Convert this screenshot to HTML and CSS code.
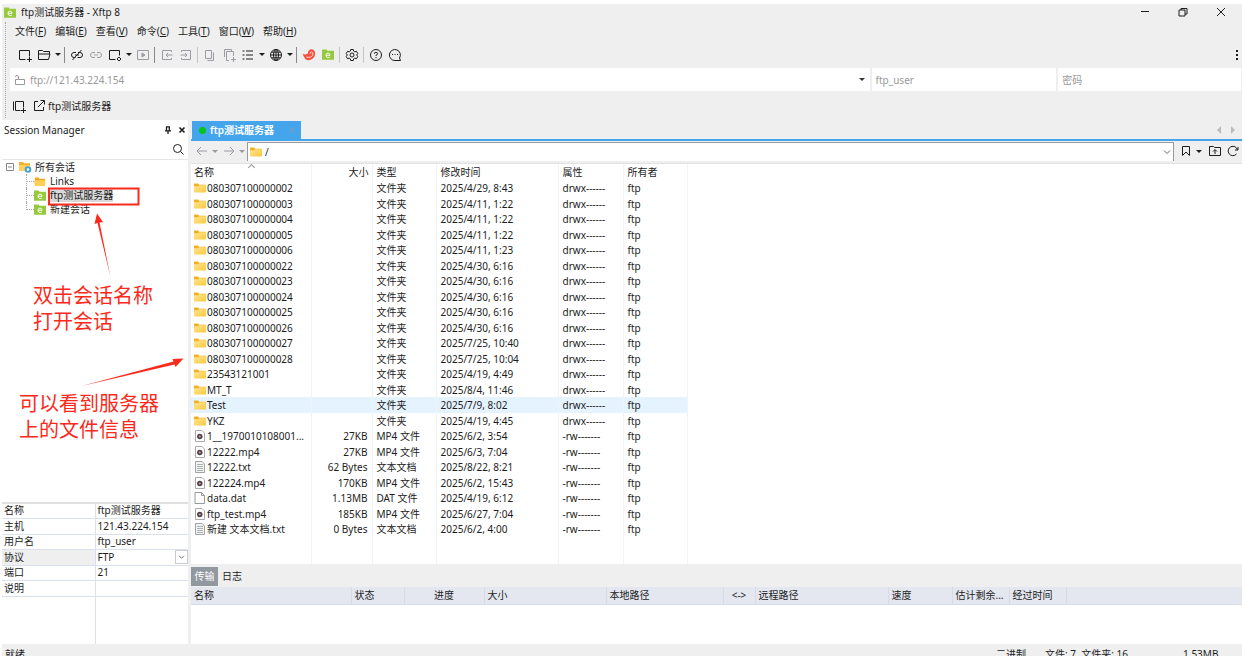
FILE: index.html
```html
<!DOCTYPE html>
<html lang="zh-CN">
<head>
<meta charset="utf-8">
<title>ftp测试服务器 - Xftp 8</title>
<link rel="stylesheet" href="styles.css">
</head>
<body>
<svg class="defs" aria-hidden="true">
  <defs>
    <linearGradient id="fg" x1="0" y1="0" x2="1" y2="1"><stop offset="0" stop-color="#ffe694"/><stop offset="1" stop-color="#fbc83c"/></linearGradient>
  </defs>
  <symbol id="folder" viewBox="0 0 12 10"><path d="M0 1.2Q0 .5.7.5H4l1 1.2h6.3q.7 0 .7.7V5H0z" fill="#f2b01e"/><path d="M0 3.2h4.2l1-.9H12v6.5q0 .7-.7.7H.7Q0 9.500 0 8.800z" fill="url(#fg)"/></symbol>
  <symbol id="openfolder" viewBox="0 0 12 10"><path d="M1 9V1h3.500l1 1.200H11V9z" fill="#f0a91f"/><path d="M0 3.800h11.500L10.800 9.500H.8z" fill="#ffcf58"/></symbol>
  <symbol id="green" viewBox="0 0 12 11"><path d="M0 .5h4.500l1 1.300H12v9H0z" fill="#96c93d"/><path d="M4 6.300h4A2 2.200 0 0 0 4 6.300q0 2.300 2.200 2.300 1.200 0 1.800-.7" fill="none" stroke="#fff" stroke-width=".9"/></symbol>
  <symbol id="mp4" viewBox="0 0 12 12"><path d="M1.500.5h6.500L10.500 3v8.500h-9z" fill="#fff" stroke="#aaa"/><circle cx="5.800" cy="6.500" r="2.700" fill="#454050"/><circle cx="5.800" cy="6.500" r="1.100" fill="#f5a06c"/></symbol>
  <symbol id="txt" viewBox="0 0 12 12"><path d="M1.500.5h6.500L10.500 3v8.500h-9z" fill="#f2f3f3" stroke="#a0a4a4"/><path d="M3 3.500h6M3 5.500h6M3 7.500h6M3 9.500h6" stroke="#a4a8a8" stroke-width=".9"/></symbol>
  <symbol id="dat" viewBox="0 0 12 12"><path d="M1 .5h6.500L10.500 3.500v8H1z" fill="#fff" stroke="#999"/><path d="M7.500.5v3h3" fill="none" stroke="#999"/></symbol>
</svg>
<div class="app">
  <header class="titlebar">
    <svg class="i12"><use href="#green"/></svg>
    <h1>ftp测试服务器 - Xftp 8</h1>
    <div class="winbtns">
      <button aria-label="最小化"><svg viewBox="0 0 10 10"><path d="M1 4.500h8"/></svg></button>
      <button aria-label="还原"><svg viewBox="0 0 10 10"><path d="M1 3h6v6H1zM3 3V1.500h6V7H7"/></svg></button>
      <button aria-label="关闭"><svg viewBox="0 0 10 10"><path d="M1 1l8 8M9 1L1 9"/></svg></button>
    </div>
  </header>

  <div class="bars">
    <nav class="menu">
      <button>文件(<u>F</u>)</button><button>编辑(<u>E</u>)</button><button>查看(<u>V</u>)</button><button>命令(<u>C</u>)</button><button>工具(<u>T</u>)</button><button>窗口(<u>W</u>)</button><button>帮助(<u>H</u>)</button>
    </nav>
    <div class="toolbar" role="toolbar">
      <button aria-label="新建"><svg viewBox="0 0 14 14"><path d="M7.500 11.500h-6v-9h10v6M11.500 9v5M9 11.500h5"/></svg></button>
      <button aria-label="打开"><svg viewBox="0 0 14 14"><path d="M1.500 11.500v-9h4l1 1h6v2.500M1.500 6h11.500l-1.500 5.500h-10"/></svg></button>
      <button class="caret" aria-label="打开列表"></button><i class="sep dark"></i>
      <button aria-label="断开"><svg viewBox="0 0 14 14"><path d="M5.500 9.500H4Q1.500 9.500 1.500 7T4 4.500h2M8 4.500h2q2.500 0 2.500 2.500T10 9.500H7.500M5 7h4M2.500 12l9-10"/></svg></button>
      <button class="off" aria-label="重新连接"><svg viewBox="0 0 14 14"><path d="M6 9.500H4Q1.500 9.500 1.500 7T4 4.500h2M8 4.500h2q2.500 0 2.500 2.500T10 9.500H8M5 7h4"/></svg></button>
      <button aria-label="属性"><svg viewBox="0 0 14 14"><path d="M7.500 11.500h-6v-9h10v5M11 9l2 2-2 2-2-2z"/></svg></button>
      <button class="caret" aria-label="属性列表"></button>
      <button class="off" aria-label="运行"><svg viewBox="0 0 14 14"><path d="M1.500 2.500h11v9h-11z"/><path d="M6 5l3 2-3 2z" fill="currentColor"/></svg></button><i class="sep dark"></i>
      <button class="off" aria-label="下载"><svg viewBox="0 0 14 14"><path d="M11.500 4V2.500h-9v9h9V10M12.500 7H6M8 5L6 7l2 2"/></svg></button>
      <button class="off" aria-label="上传"><svg viewBox="0 0 14 14"><path d="M2.500 4V2.500h9v9h-9V10M1.500 7H8M6 5l2 2-2 2"/></svg></button><i class="sep"></i>
      <button class="off" aria-label="复制"><svg viewBox="0 0 14 14"><path d="M2.500 2.500h6v8h-6zM4.500 12.500h6v-8"/></svg></button>
      <button class="off" aria-label="粘贴"><svg viewBox="0 0 14 14"><path d="M2.500 9V1.500h7V3M7 12.500H4.500v-9h7V8M11.500 9v5M9 11.500h5"/></svg></button>
      <button aria-label="视图"><svg viewBox="0 0 14 14"><path d="M5 3h7M5 7h7M5 11h7M1.500 3h2M1.500 7h2M1.500 11h2"/></svg></button>
      <button class="caret" aria-label="视图列表"></button>
      <button aria-label="编码"><svg viewBox="0 0 14 14"><circle cx="7" cy="7" r="5.500"/><ellipse cx="7" cy="7" rx="2.500" ry="5.500"/><path d="M1.500 7h11M7 1.500v11M2.500 4.200h9M2.500 9.800h9"/></svg></button>
      <button class="caret" aria-label="编码列表"></button><i class="sep dark"></i>
      <button aria-label="Xshell"><svg viewBox="0 0 14 14"><path d="M1 5.500Q3 7.500 5.800 5.500C5.800 3 7.500 1 10 1.300c3.500.6 4 5.500 1.600 8.500C8.500 13.500 3 12.500 2.500 9.500 1.500 8.500 1 7 1 5.500z" fill="#f4503b" stroke="none"/><path d="M4.500 9q5.500 1.500 6.500-3Q11 4 9.200 4 7.500 4.300 8 6" stroke="#ffd5cd"/></svg></button>
      <button aria-label="Xftp"><svg class="i12"><use href="#green"/></svg></button><i class="sep"></i>
      <button aria-label="选项"><svg viewBox="0 0 14 14"><path d="M5.700 1.500h2.600l.4 1.700 1.100.6 1.700-.5 1.300 2.300L11.600 7l1.200 1.400-1.300 2.300-1.700-.5-1.100.6-.4 1.700H5.700l-.4-1.700-1.100-.6-1.700.5-1.300-2.300L2.400 7 1.200 5.600l1.300-2.300 1.700.5 1.100-.6z"/><circle cx="7" cy="7" r="2"/></svg></button><i class="sep"></i>
      <button aria-label="帮助"><svg viewBox="0 0 14 14"><circle cx="7" cy="7" r="5.500"/><path d="M5.300 5.800Q5.300 4.300 7 4.300t1.700 1.400Q8.700 6.600 7 7.200V8M7 9v1.200"/></svg></button>
      <button aria-label="反馈"><svg viewBox="0 0 14 14"><path d="M12.500 12.500H7A5.500 5.500 0 1 1 11.500 10z"/><path d="M4 6.500h1M6.500 6.500h1M9 6.500h1"/></svg></button>
      <button class="more" aria-label="更多"><svg viewBox="0 0 4 14"><path d="M2 2v2M2 6v2M2 10v2" stroke-width="2"/></svg></button>
    </div>
    <div class="address">
      <label class="host"><svg viewBox="0 0 12 12"><path d="M4.500 5.500h6v5h-9v-5h3V3Q4.500 1.500 3 1.500T1.500 3"/></svg><input aria-label="地址" value="ftp://121.43.224.154"><button class="caret" aria-label="地址列表"></button></label>
      <input class="user" aria-label="用户名" value="ftp_user">
      <input class="pass" aria-label="密码" type="password" placeholder="密码">
    </div>
    <div class="links">
      <button aria-label="添加到链接栏"><svg viewBox="0 0 14 14"><path d="M1.500 2.500v9M8.500 11.500h-5v-9h8v6M11.500 9v5M9 11.500h5"/></svg></button>
      <button><svg viewBox="0 0 14 14"><path d="M6 2.500H2.500v9h9V8M6 8l6-6M8.500 1.500h4v4"/></svg>ftp测试服务器</button>
    </div>
  </div>

  <main class="work">
    <aside class="side">
      <div class="sidehead"><h2>Session Manager</h2>
        <button aria-label="固定"><svg viewBox="0 0 8 8"><path d="M2 .8h4M2.500 1v3.500M5.300 1v3.500M1 4.800h6M4 5v3" stroke-width="1.300"/></svg></button>
        <button aria-label="关闭"><svg viewBox="0 0 8 8"><path d="M1.500 1.500l5 5M6.500 1.500l-5 5" stroke-width="1.600"/></svg></button></div>
      <div class="search"><input aria-label="搜索会话"><button aria-label="搜索"><svg viewBox="0 0 12 12"><circle cx="5.500" cy="5.500" r="4"/><path d="M8.500 8.500l3 3"/></svg></button></div>
      <div class="tree">
        <div class="root"><button class="toggle" aria-label="折叠"><svg viewBox="0 0 8 8"><path d="M.5.5h7v7h-7zM2 4h4"/></svg></button>
          <svg class="rooticon" viewBox="0 0 13 12"><path d="M0 9.500V1h4l1 1.200h6V9.500z" fill="#f5b02c"/><path d="M0 4h11v6H0z" fill="#ffd062"/><circle cx="9" cy="8.500" r="2.300" fill="#fff" stroke="#43a5d4" stroke-width="2"/></svg>所有会话</div>
        <ul>
          <li><svg class="i12"><use href="#openfolder"/></svg><span>Links</span></li>
          <li><svg class="i12"><use href="#green"/></svg><span class="sel">ftp测试服务器</span></li>
          <li><svg class="i12"><use href="#green"/></svg><span>新建会话</span></li>
        </ul>
      </div>
      <table class="props">
        <tr><th>名称</th><td>ftp测试服务器</td></tr>
        <tr><th>主机</th><td>121.43.224.154</td></tr>
        <tr><th>用户名</th><td>ftp_user</td></tr>
        <tr class="active"><th><label for="proto">协议</label></th><td><div class="pick"><select id="proto"><option>FTP</option></select><svg viewBox="0 0 12 14"><path d="M3 5.500l3 3 3-3"/></svg></div></td></tr>
        <tr><th>端口</th><td>21</td></tr>
        <tr><th>说明</th><td></td></tr>
        <tr class="fill"><th></th><td></td></tr>
      </table>
      <div class="notes">
        <svg viewBox="2 120 190 400"><path class="box" d="M49 188.500h89.500v16H49z"/><path d="M110.500 277L99.500 222.500 103 222 97 213.500 94.500 224 97.500 223z"/><path d="M81.500 386L174.500 364.500 175.500 367 183.500 358.500 172.500 359 173.500 361.500z"/></svg>
        <p class="n1">双击会话名称<br>打开会话</p>
        <p class="n2">可以看到服务器<br>上的文件信息</p>
      </div>
    </aside>

    <section class="content">
      <div class="tabs"><button class="tab"><i class="dot"></i>ftp测试服务器<svg viewBox="0 0 8 8"><path d="M1 1l6 6M7 1L1 7"/></svg></button>
        <div class="arrows"><button aria-label="上一个"><svg viewBox="0 0 6 8"><path d="M5 0v8L1 4z"/></svg></button><button aria-label="下一个"><svg viewBox="0 0 6 8"><path d="M1 0v8l4-4z"/></svg></button></div></div>
      <div class="nav">
        <button class="off" aria-label="后退"><svg viewBox="0 0 12 12"><path d="M11 6H1M5 2L1 6l4 4"/></svg></button><button class="caret off" aria-label="后退列表"></button>
        <button class="off" aria-label="前进"><svg viewBox="0 0 12 12"><path d="M1 6h10M7 2l4 4-4 4"/></svg></button><button class="caret off" aria-label="前进列表"></button>
        <label class="path"><svg class="i12"><use href="#folder"/></svg><input aria-label="路径" value="/"><svg class="chev" viewBox="0 0 12 12"><path d="M3 4.500l3 3 3-3"/></svg></label>
        <button aria-label="书签"><svg viewBox="0 0 12 12"><path d="M2.500 1.500h7v9L6 7l-3.500 3.500z"/></svg></button><button class="caret" aria-label="书签列表"></button>
        <button class="up" aria-label="上级目录"><svg viewBox="0 0 14 12"><path d="M1.500 10.500v-9h4l1 1h6v8zM7 9V5M5 6.500l2-2 2 2"/></svg></button>
        <button aria-label="刷新"><svg viewBox="0 0 12 12"><path d="M10.500 5A4.700 4.700 0 1 0 9.500 9M8 5h3V2"/></svg></button>
      </div>
      <div class="list">
        <table class="files">
          <colgroup><col class="c1"><col class="c2"><col class="c3"><col class="c4"><col class="c5"><col class="c6"></colgroup>
          <thead><tr><th class="sorted">名称</th><th class="r">大小</th><th>类型</th><th>修改时间</th><th>属性</th><th>所有者</th></tr></thead>
          <tbody>
          <tr><td><svg><use href="#folder"/></svg>080307100000002</td><td></td><td>文件夹</td><td>2025/4/29, 8:43</td><td>drwx------</td><td>ftp</td></tr>
          <tr><td><svg><use href="#folder"/></svg>080307100000003</td><td></td><td>文件夹</td><td>2025/4/11, 1:22</td><td>drwx------</td><td>ftp</td></tr>
          <tr><td><svg><use href="#folder"/></svg>080307100000004</td><td></td><td>文件夹</td><td>2025/4/11, 1:22</td><td>drwx------</td><td>ftp</td></tr>
          <tr><td><svg><use href="#folder"/></svg>080307100000005</td><td></td><td>文件夹</td><td>2025/4/11, 1:22</td><td>drwx------</td><td>ftp</td></tr>
          <tr><td><svg><use href="#folder"/></svg>080307100000006</td><td></td><td>文件夹</td><td>2025/4/11, 1:23</td><td>drwx------</td><td>ftp</td></tr>
          <tr><td><svg><use href="#folder"/></svg>080307100000022</td><td></td><td>文件夹</td><td>2025/4/30, 6:16</td><td>drwx------</td><td>ftp</td></tr>
          <tr><td><svg><use href="#folder"/></svg>080307100000023</td><td></td><td>文件夹</td><td>2025/4/30, 6:16</td><td>drwx------</td><td>ftp</td></tr>
          <tr><td><svg><use href="#folder"/></svg>080307100000024</td><td></td><td>文件夹</td><td>2025/4/30, 6:16</td><td>drwx------</td><td>ftp</td></tr>
          <tr><td><svg><use href="#folder"/></svg>080307100000025</td><td></td><td>文件夹</td><td>2025/4/30, 6:16</td><td>drwx------</td><td>ftp</td></tr>
          <tr><td><svg><use href="#folder"/></svg>080307100000026</td><td></td><td>文件夹</td><td>2025/4/30, 6:16</td><td>drwx------</td><td>ftp</td></tr>
          <tr><td><svg><use href="#folder"/></svg>080307100000027</td><td></td><td>文件夹</td><td>2025/7/25, 10:40</td><td>drwx------</td><td>ftp</td></tr>
          <tr><td><svg><use href="#folder"/></svg>080307100000028</td><td></td><td>文件夹</td><td>2025/7/25, 10:04</td><td>drwx------</td><td>ftp</td></tr>
          <tr><td><svg><use href="#folder"/></svg>23543121001</td><td></td><td>文件夹</td><td>2025/4/19, 4:49</td><td>drwx------</td><td>ftp</td></tr>
          <tr><td><svg><use href="#folder"/></svg>MT_T</td><td></td><td>文件夹</td><td>2025/8/4, 11:46</td><td>drwx------</td><td>ftp</td></tr>
          <tr class="hot"><td><svg><use href="#folder"/></svg>Test</td><td></td><td>文件夹</td><td>2025/7/9, 8:02</td><td>drwx------</td><td>ftp</td></tr>
          <tr><td><svg><use href="#folder"/></svg>YKZ</td><td></td><td>文件夹</td><td>2025/4/19, 4:45</td><td>drwx------</td><td>ftp</td></tr>
          <tr><td><svg><use href="#mp4"/></svg>1__1970010108001...</td><td>27KB</td><td>MP4 文件</td><td>2025/6/2, 3:54</td><td>-rw-------</td><td>ftp</td></tr>
          <tr><td><svg><use href="#mp4"/></svg>12222.mp4</td><td>27KB</td><td>MP4 文件</td><td>2025/6/3, 7:04</td><td>-rw-------</td><td>ftp</td></tr>
          <tr><td><svg><use href="#txt"/></svg>12222.txt</td><td>62 Bytes</td><td>文本文档</td><td>2025/8/22, 8:21</td><td>-rw-------</td><td>ftp</td></tr>
          <tr><td><svg><use href="#mp4"/></svg>122224.mp4</td><td>170KB</td><td>MP4 文件</td><td>2025/6/2, 15:43</td><td>-rw-------</td><td>ftp</td></tr>
          <tr><td><svg><use href="#dat"/></svg>data.dat</td><td>1.13MB</td><td>DAT 文件</td><td>2025/4/19, 6:12</td><td>-rw-------</td><td>ftp</td></tr>
          <tr><td><svg><use href="#mp4"/></svg>ftp_test.mp4</td><td>185KB</td><td>MP4 文件</td><td>2025/6/27, 7:04</td><td>-rw-------</td><td>ftp</td></tr>
          <tr><td><svg><use href="#txt"/></svg>新建 文本文档.txt</td><td>0 Bytes</td><td>文本文档</td><td>2025/6/2, 4:00</td><td>-rw-------</td><td>ftp</td></tr>
          <tr class="fill"><td></td><td></td><td></td><td></td><td></td><td></td></tr>
          </tbody>
        </table>
      </div>
      <div class="lowtabs"><button class="on">传输</button><button>日志</button></div>
      <div class="transfers">
        <table>
          <colgroup><col class="t160"><col class="t53"><col class="t80"><col class="t122"><col class="t117"><col class="t32"><col class="t133"><col class="t64"><col class="t57"><col class="t57"><col></colgroup>
          <tr><th>名称</th><th>状态</th><th class="mid">进度</th><th>大小</th><th>本地路径</th><th class="mid">&lt;-&gt;</th><th>远程路径</th><th>速度</th><th>估计剩余...</th><th>经过时间</th><th></th></tr>
        </table>
      </div>
    </section>
  </main>
  <footer class="status"><span>就绪</span><span class="mode">二进制</span><span class="count">文件: 7&nbsp; 文件夹: 16</span><span class="size">1.53MB</span></footer>
</div>
</body>
</html>
```

FILE: styles.css
```css
* { box-sizing: border-box; }
body, h1, h2, p, ul { margin: 0; padding: 0; }
body { background: #fff; }
body, button, input, select, table {
  font: 10px/14px "Noto Sans", "Noto Sans CJK SC", sans-serif;
  color: #1c1c1c;
}
button, input, select { border: 0; padding: 0; background: none; min-width: 0; }
button { display: flex; align-items: center; justify-content: center; white-space: nowrap; }
svg { display: block; flex: none; fill: none; stroke: currentColor; }
use { stroke: none; }
h1, h2 { font-size: 10px; font-weight: 400; }
table { border-collapse: collapse; table-layout: fixed; }
th { font-weight: 400; text-align: left; }
th, td { padding: 0; white-space: nowrap; }
.defs { position: absolute; width: 0; height: 0; }
.i12 { width: 12px; height: 11px; }
.off { color: #9b9ba3; }

.app { height: 100vh; padding: 4px 2px 5px; display: flex; flex-direction: column; }
.titlebar, .bars, .status { background: #efefef; }
.titlebar { height: 16px; flex: none; display: flex; align-items: center; padding: 0 2px; gap: 5px; }
.winbtns { margin-left: auto; display: flex; }
.winbtns button { width: 38px; }
.winbtns svg { width: 10px; height: 10px; }

.bars { flex: none; padding-left: 8px; position: relative; }
.bars::before { content: ""; position: absolute; left: 3px; top: 2px; bottom: 2px; border-left: 1px dotted #a8a8a8; }
.menu { height: 22px; display: flex; align-items: center; gap: 9px; padding-left: 5px; }
.toolbar { height: 25px; display: flex; align-items: center; padding-left: 5px; margin-bottom: 1px; color: #333; }
.toolbar button { width: 19px; height: 20px; }
.toolbar svg { width: 14px; height: 14px; }
.toolbar .i12 { width: 12px; height: 11px; }
.toolbar .more { margin-left: auto; width: 10px; }
.toolbar .more svg { width: 4px; }
.caret::before { content: ""; border: 3px solid transparent; border-top-color: currentColor; border-bottom: 0; }
.toolbar .caret { width: 9px; }
.sep { width: 5px; height: 16px; background: linear-gradient(#c4c4c4, #c4c4c4) center / 1px 100% no-repeat; }
.sep.dark { background-image: linear-gradient(#888, #888); }
.address { height: 23px; display: flex; gap: 2px; padding-right: 1px; }
.address > * { background: #fff; }
.address input { color: #999; height: 100%; }
.address input::placeholder { color: #999; opacity: 1; }
.host { flex: 866; display: flex; align-items: center; padding: 0 5px 0 4px; gap: 4px; color: #999; }
.host svg { width: 12px; height: 12px; }
.host input { flex: 1; }
.host .caret { color: #333; }
.address .user { flex: 184; padding-left: 4px; }
.address .pass { flex: 182; padding-left: 4px; }
.links { height: 29px; display: flex; align-items: center; gap: 6px; padding-left: 2px; }
.links button { gap: 2px; }
.links svg { width: 14px; height: 14px; }

.work { flex: 1; min-height: 0; display: grid; grid-template-columns: 186px minmax(0, 1fr); column-gap: 3px; background: #efefef; }
.side { background: #fff; display: flex; flex-direction: column; position: relative; min-height: 0; }
.sidehead { height: 19px; display: flex; align-items: center; gap: 6px; padding: 0 2px; }
.sidehead h2 { margin-right: auto; }
.sidehead svg { width: 8px; height: 8px; }
.search { height: 21px; display: flex; align-items: center; padding: 0 4px; border-bottom: 1px solid #e6e6e6; }
.search input { flex: 1; }
.search svg { width: 12px; height: 12px; }
.tree { flex: 1; min-height: 0; }
.root { display: flex; align-items: center; height: 14px; padding-left: 4px; }
.toggle svg { width: 8px; height: 8px; color: #888; }
.rooticon { width: 13px; height: 12px; margin: 0 3px 0 5px; }
.rooticon path { stroke: none; }
.tree ul { list-style: none; margin-left: 24px; }
.tree li { display: flex; align-items: center; gap: 4px; height: 14px; position: relative; padding-left: 8px; }
.tree li::before { content: ""; position: absolute; left: 0; top: 0; width: 7px; height: 7px; border: dotted #aaa; border-width: 0 0 1px 1px; }
.tree li:not(:last-child)::after { content: ""; position: absolute; left: 0; top: 7px; height: 7px; border-left: 1px dotted #aaa; }
.sel { background: #d9d9d9; }
.props { width: 100%; height: 142px; border-top: 2px solid #e0e0e0; }
.props th, .props td { height: 15px; border-bottom: 1px solid #dae1ed; padding-left: 2px; line-height: 13px; }
.props tr:nth-child(even) > * { height: 16px; }
.props th { width: 93px; border-right: 1px solid #dae1ed; }
.props .fill > * { height: auto; border-bottom: 0; }
.props .active th { background: #efefef; }
.pick { display: flex; height: 14px; }
.pick select { flex: 1; appearance: none; line-height: 13px; }
.pick svg { width: 13px; height: 14px; border: 1px solid #ccc; color: #666; }

.notes { position: absolute; inset: 0; pointer-events: none; color: #fb2a1c; }
.notes svg { width: 190px; height: 400px; fill: currentColor; stroke: none; }
.notes .box { fill: none; stroke: currentColor; stroke-width: 2; }
.notes p { position: absolute; font-size: 20px; line-height: 26px; white-space: nowrap; }
.n1 { left: 31px; top: 163px; }
.n2 { left: 17px; top: 271px; }

.content { display: flex; flex-direction: column; min-height: 0; }
.tabs { height: 21px; flex: none; display: flex; align-items: flex-end; border-bottom: 2px solid #45a5ec; padding-left: 1px; }
.tab { height: 18px; background: #45a5ec; color: #fff; font-weight: 600; width: 109px; padding: 0 5px 0 7px; justify-content: flex-start; }
.tab svg { width: 8px; height: 8px; margin-left: auto; color: #7f9bbb; }
.dot { width: 7px; height: 7px; border-radius: 50%; background: #06c51c; margin-right: 4px; }
.arrows { margin-left: auto; display: flex; gap: 8px; padding: 0 6px 5px 0; }
.arrows button { color: #bbb; }
.arrows svg { width: 6px; height: 8px; fill: currentColor; stroke: none; }
.nav { height: 22px; flex: none; display: flex; align-items: center; padding: 0 2px 2px 3px; }
.nav > button { width: 15px; }
.nav > .up { width: 20px; }
.nav > .caret { width: 12px; }
.nav svg { width: 12px; height: 12px; }
.nav .up svg { width: 14px; }
.path { flex: 1; height: 19px; margin: 0 4px 0 -1px; display: flex; align-items: center; gap: 3px; padding: 0 0 0 2px; background: #fff; border: solid #999; border-width: 1px 1px 0; }
.path input { flex: 1; }
.path .chev { color: #666; }
.list { flex: 1; min-height: 0; overflow: hidden; background: #fff; border-top: 1px solid #e2e2e2; }
.files { height: 100%; width: 496px; }
.c1 { width: 120px; } .c2 { width: 61px; } .c3 { width: 64px; } .c4 { width: 122px; } .c5 { width: 65px; } .c6 { width: 64px; }
.files td, .files th { border-right: 1px solid #edf4fb; padding-left: 4px; height: 15px; line-height: 14px; overflow: hidden; }
.files th { height: 16px; }
.files tr:nth-child(odd) td { height: 16px; }
.files td:first-child, .files th:first-child { padding-left: 3px; }
.files td:first-child svg { width: 12px; height: 12px; float: left; margin: 1px 1px 0 0; }
.files td:nth-child(2) { text-align: right; padding-right: 4px; }
.files .r { text-align: right; padding-right: 3px; }
.files .hot td { background: #e5f3ff; }
.files .fill td { height: auto; }
.sorted { position: relative; }
.sorted::after { content: ""; position: absolute; left: 58px; top: 1px; width: 4px; height: 4px; border: solid #999; border-width: 1px 0 0 1px; transform: rotate(45deg); }
.lowtabs { height: 23px; flex: none; display: flex; align-items: center; gap: 4px; padding-top: 1px; }
.lowtabs .on { background: #91989f; color: #fff; width: 27px; height: 19px; }
.transfers { height: 57px; flex: none; background: #fff; overflow: hidden; }
.transfers table { width: 100%; }
.transfers th { height: 17px; background: #e4e7f0; border: solid #d5dce8; border-width: 0 1px 1px 0; padding-left: 3px; line-height: 14px; }
.transfers th:last-child { border-right: 0; }
.transfers .mid { text-align: center; padding: 0; }
.t160 { width: 160px; } .t53 { width: 53px; } .t80 { width: 80px; } .t122 { width: 122px; } .t117 { width: 117px; } .t32 { width: 32px; } .t133 { width: 133px; } .t64 { width: 64px; } .t57 { width: 57px; }
.status { height: 12px; flex: none; overflow: hidden; display: flex; padding: 3px 0 0 3px; }
.mode { margin-left: auto; width: 49px; }
.count { width: 138px; }
.size { width: 59px; }
```
